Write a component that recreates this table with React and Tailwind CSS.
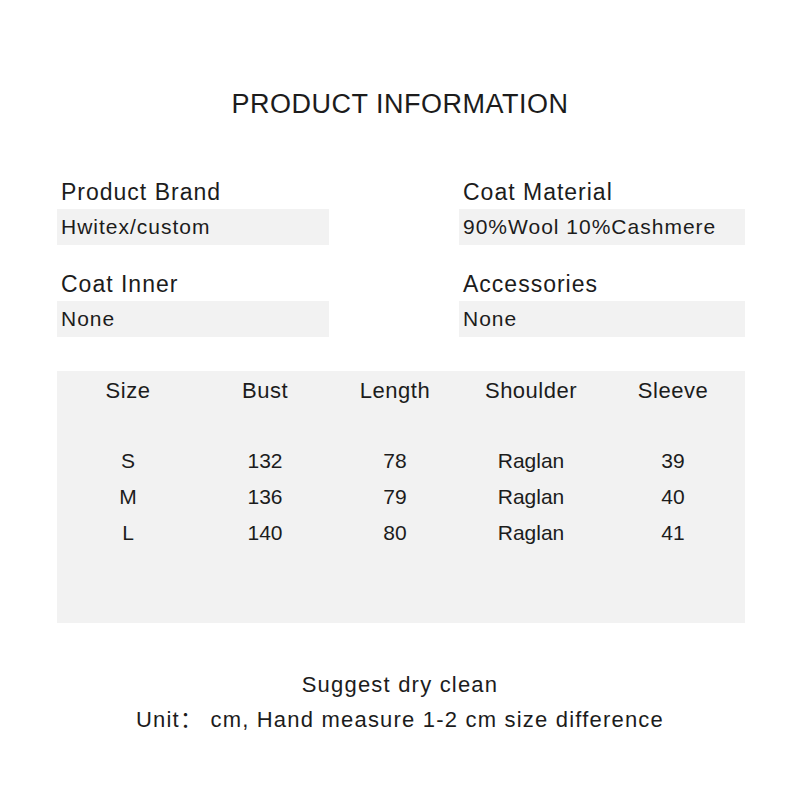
import React from "react";

const info = [
  [
    { label: "Product Brand", value: "Hwitex/custom" },
    { label: "Coat Inner", value: "None" },
  ],
  [
    { label: "Coat Material", value: "90%Wool 10%Cashmere" },
    { label: "Accessories", value: "None" },
  ],
];

const rows = [
  ["S", "132", "78", "Raglan", "39"],
  ["M", "136", "79", "Raglan", "40"],
  ["L", "140", "80", "Raglan", "41"],
];

const head = ["Size", "Bust", "Length", "Shoulder", "Sleeve"];

function InfoItem({ label, value }) {
  return (
    <div className="flex flex-col">
      <p className="pl-[4px] text-[23px] leading-[34px] tracking-[1px]">{label}</p>
      <p className="bg-[#f2f2f2] h-[36px] pl-[4px] text-[21px] leading-[36px] tracking-[1px]">
        {value}
      </p>
    </div>
  );
}

function App() {
  return (
    <div
      className="w-[800px] h-[800px] bg-white text-[#1c1c1c] flex flex-col items-center pt-[84px]"
      style={{ fontFamily: '"Liberation Sans", "Noto Sans CJK SC", sans-serif' }}
    >
      <h1 className="text-[27px] leading-[40px] tracking-[0.5px] font-normal">
        PRODUCT INFORMATION
      </h1>

      <div className="w-[688px] ml-[2px] mt-[51px] flex justify-between">
        {info.map((col, i) => (
          <div
            key={i}
            className={`flex flex-col gap-[22px] ${i === 0 ? "w-[272px]" : "w-[286px]"}`}
          >
            {col.map((it) => (
              <InfoItem key={it.label} {...it} />
            ))}
          </div>
        ))}
      </div>

      <div className="w-[688px] ml-[2px] h-[252px] mt-[34px] bg-[#f2f2f2] pt-[2px] text-[22px]">
        <div className="grid grid-cols-[142px_132px_128px_144px_140px] leading-[36px] text-center tracking-[0.5px]">
          {head.map((h) => (
            <span key={h}>{h}</span>
          ))}
        </div>
        <div className="mt-[34px] flex flex-col">
          {rows.map((r) => (
            <div
              key={r[0]}
              className="grid grid-cols-[142px_132px_128px_144px_140px] leading-[36px] text-center text-[21px]"
            >
              {r.map((c, j) => (
                <span key={j}>{c}</span>
              ))}
            </div>
          ))}
        </div>
      </div>

      <div className="mt-[44px] flex flex-col items-center text-[22px] leading-[35px] tracking-[1.2px]">
        <p>Suggest dry clean</p>
        <p>Unit：&nbsp;cm, Hand measure 1-2 cm size difference</p>
      </div>
    </div>
  );
}

export default App;
